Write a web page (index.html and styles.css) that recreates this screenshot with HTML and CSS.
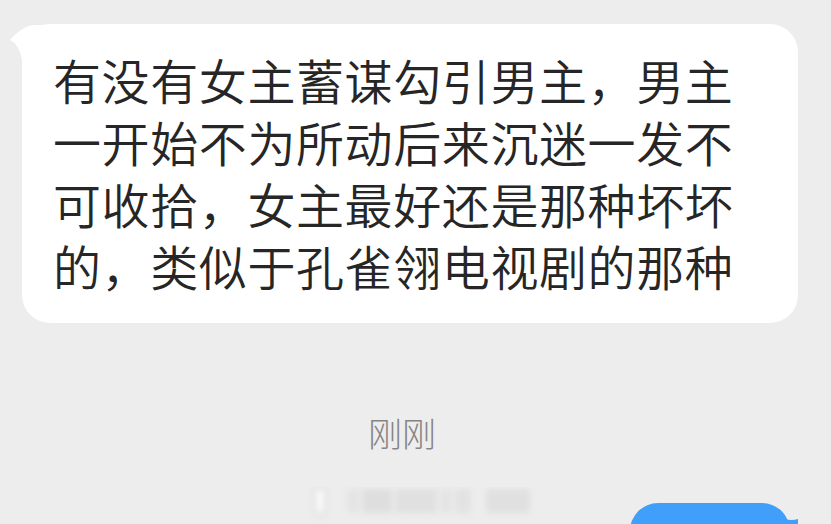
FILE: index.html
```html
<!DOCTYPE html>
<html lang="zh">
<head>
<meta charset="utf-8">
<link rel="stylesheet" href="styles.css">
</head>
<body>
<div class="chat">
  <div class="row-in">
    <div class="bubble">
      <svg class="tail" width="40" height="40" viewBox="0 0 40 40"><path d="M22,1 Q10,4 0,16 Q9,20 12,36 L40,36 L40,1 Z" fill="#ffffff"/></svg>
      <p class="msg">有没有女主蓄谋勾引男主，男主一开始不为所动后来沉迷一发不可收拾，女主最好还是那种坏坏的，类似于孔雀翎电视剧的那种</p>
    </div>
  </div>
  <div class="time">刚刚</div>
  <div class="bottom">
    <div class="blurred">
      <span class="bl b0"></span>
      <span class="bl b1"></span>
      <span class="bl b2"></span>
      <span class="bl b3"></span>
      <span class="bl b4"></span>
      <span class="bl b5"></span>
      <span class="bl b6"></span>
    </div>
    <div class="out">
      <div class="bubble-out"></div>
      <svg class="tail-out" width="14" height="16" viewBox="0 0 14 16"><path d="M0,2 Q8,4 14,2 L14,16 L0,16 Z" fill="#3f9ffa"/></svg>
    </div>
  </div>
</div>
</body>
</html>
```
FILE: styles.css
```css
html, body {
  margin: 0;
  padding: 0;
  background: #ededed;
  height: 524px;
  overflow: hidden;
}
.chat {
  display: flex;
  flex-direction: column;
  height: 524px;
  overflow: hidden;
  font-family: "Noto Sans CJK SC", "Noto Sans", sans-serif;
}
.row-in {
  display: flex;
  padding: 24px 0 0 22px;
}
.bubble {
  position: relative;
  background: #ffffff;
  border-radius: 28px;
  width: 776px;
  box-sizing: border-box;
  padding: 24px 20px 27px 31px;
}
.tail {
  position: absolute;
  left: -12px;
  top: 0;
}
.msg {
  margin: 0;
  width: 690px;
  font-size: 48px;
  font-weight: 350;
  letter-spacing: 0.6px;
  line-height: 62px;
  color: #262626;
  position: relative;
}
.time {
  margin-top: 90px;
  padding-right: 27px;
  text-align: center;
  font-size: 34px;
  font-weight: 300;
  line-height: 40px;
  color: #858585;
}
.bottom {
  display: grid;
  margin-top: 34px;
  height: 40px;
  overflow: hidden;
}
.blurred {
  grid-area: 1 / 1;
  display: flex;
  align-items: center;
  gap: 3px;
  margin-left: 313px;
  height: 28px;
}
.bl {
  display: block;
  height: 24px;
  background: #e2e2e2;
  filter: blur(3px);
  border-radius: 3px;
}
.b0 { width: 8px; background: #fbfbfb; box-shadow: 0 0 0 3px #dedede; margin-left: 3px; }
.b1 { width: 12px; margin-left: 20px; background: #e4e4e4; }
.b2 { width: 30px; background: #dedede; }
.b3 { width: 42px; background: #e0e0e0; }
.b4 { width: 12px; background: #e4e4e4; }
.b5 { width: 16px; background: #e2e2e2; }
.b6 { width: 44px; margin-left: 12px; background: #e0e0e0; }
.out {
  grid-area: 1 / 1;
  display: flex;
  justify-content: flex-end;
  align-items: flex-start;
  margin-top: 16px;
  padding-right: 33px;
}
.bubble-out {
  width: 160px;
  height: 60px;
  background: #3f9ffa;
  border-radius: 28px;
}
.tail-out {
  margin-left: -6px;
  margin-top: 14px;
}
```
